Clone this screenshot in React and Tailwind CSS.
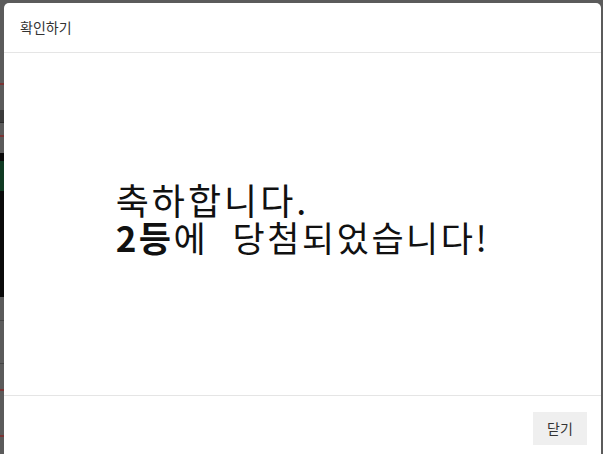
import React from 'react';

const font = { fontFamily: '"Noto Sans CJK KR", "Noto Sans", sans-serif' };

// dimmed page peeking out on the left of the dialog
const LeftStrip = () => (
  <div className="flex w-[4px] shrink-0 flex-col">
    <div className="h-[83px] bg-[#5b5b5b]" />
    <div className="h-[2px] bg-[#7a3434]" />
    <div className="h-[25px] bg-[#5b5b5b]" />
    <div className="h-[12px] bg-[#3a3a3a]" />
    <div className="h-[1px] bg-[#2a2a2a]" />
    <div className="h-[12px] bg-[#5b5b5b]" />
    <div className="h-[2px] bg-[#7a3434]" />
    <div className="h-[16px] bg-[#5b5b5b]" />
    <div className="h-[8px] bg-[#0a0a0a]" />
    <div className="h-[30px] bg-[#0f3a22]" />
    <div className="h-[106px] bg-[#0a0a0a]" />
    <div className="h-[23px] bg-[#5b5b5b]" />
    <div className="h-[1px] bg-[#444]" />
    <div className="h-[42px] bg-[#5b5b5b]" />
    <div className="h-[1px] bg-[#444]" />
    <div className="h-[25px] bg-[#5b5b5b]" />
    <div className="h-[2px] bg-[#7a3434]" />
    <div className="h-[44px] bg-[#5b5b5b]" />
    <div className="h-[2px] bg-[#7a3434]" />
    <div className="flex-1 bg-[#5b5b5b]" />
  </div>
);

export default function App() {
  return (
    <div className="flex h-[454px] w-[603px] overflow-hidden bg-[#5b5b5b]" style={font}>
      <LeftStrip />
      <div className="mt-[3px] flex flex-1 flex-col rounded-t-[5px] bg-white">
        <div className="flex h-[50px] shrink-0 items-center border-b border-[#e5e5e5] px-4">
          <span className="text-[14px] text-[#333]">확인하기</span>
        </div>
        <div className="flex h-[342px] shrink-0 items-center justify-center pb-[12px]">
          <div className="text-left text-[#111]">
            <div className="text-[36px] leading-[37px] tracking-[3px]">축하합니다.</div>
            <div className="text-[35px] leading-[37px] tracking-[2.5px] [word-spacing:14px]">
              <span className="font-bold">2등</span>에 당첨되었습니다!
            </div>
          </div>
        </div>
        <div className="flex shrink-0 justify-end border-t border-[#e5e5e5] px-[14px] py-4">
          <button className="h-[33px] w-[54px] bg-[#efefef] text-[14px] text-[#333]">닫기</button>
        </div>
      </div>
      <div className="w-[2px] shrink-0 bg-[#5b5b5b]" />
    </div>
  );
}
